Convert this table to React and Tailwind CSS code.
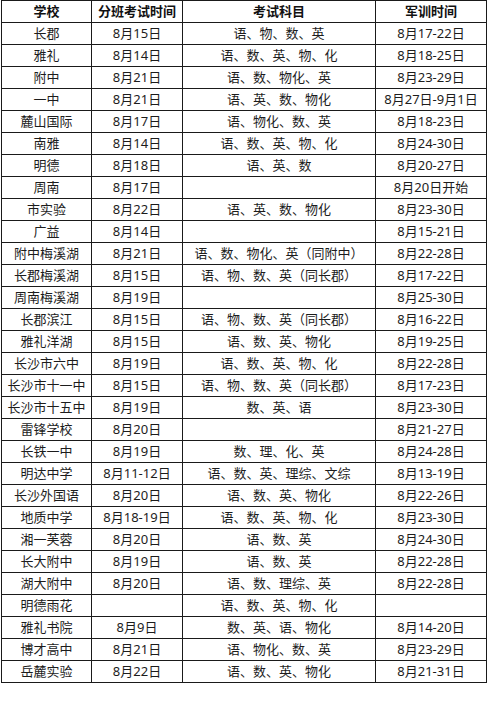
const rows = [
  ['长郡', '8月15日', '语、物、数、英', '8月17-22日'],
  ['雅礼', '8月14日', '语、数、英、物、化', '8月18-25日'],
  ['附中', '8月21日', '语、数、物化、英', '8月23-29日'],
  ['一中', '8月21日', '语、英、数、物化', '8月27日-9月1日'],
  ['麓山国际', '8月17日', '语、物化、数、英', '8月18-23日'],
  ['南雅', '8月14日', '语、数、英、物、化', '8月24-30日'],
  ['明德', '8月18日', '语、英、数', '8月20-27日'],
  ['周南', '8月17日', '', '8月20日开始'],
  ['市实验', '8月22日', '语、英、数、物化', '8月23-30日'],
  ['广益', '8月14日', '', '8月15-21日'],
  ['附中梅溪湖', '8月21日', '语、数、物化、英（同附中）', '8月22-28日'],
  ['长郡梅溪湖', '8月15日', '语、物、数、英（同长郡）', '8月17-22日'],
  ['周南梅溪湖', '8月19日', '', '8月25-30日'],
  ['长郡滨江', '8月15日', '语、物、数、英（同长郡）', '8月16-22日'],
  ['雅礼洋湖', '8月15日', '语、数、英、物化', '8月19-25日'],
  ['长沙市六中', '8月19日', '语、数、英、物、化', '8月22-28日'],
  ['长沙市十一中', '8月15日', '语、物、数、英（同长郡）', '8月17-23日'],
  ['长沙市十五中', '8月19日', '数、英、语', '8月23-30日'],
  ['雷锋学校', '8月20日', '', '8月21-27日'],
  ['长铁一中', '8月19日', '数、理、化、英', '8月24-28日'],
  ['明达中学', '8月11-12日', '语、数、英、理综、文综', '8月13-19日'],
  ['长沙外国语', '8月20日', '语、数、英、物化', '8月22-26日'],
  ['地质中学', '8月18-19日', '语、数、英、物、化', '8月23-30日'],
  ['湘一芙蓉', '8月20日', '语、数、英', '8月24-30日'],
  ['长大附中', '8月19日', '语、数、英', '8月22-28日'],
  ['湖大附中', '8月20日', '语、数、理综、英', '8月22-28日'],
  ['明德雨花', '', '语、数、英、物、化', ''],
  ['雅礼书院', '8月9日', '数、英、语、物化', '8月14-20日'],
  ['博才高中', '8月21日', '语、物化、数、英', '8月23-29日'],
  ['岳麓实验', '8月22日', '语、数、英、物化', '8月21-31日'],
]

function Cell({ children, bold }) {
  return (
    <div
      className={`h-[22px] border-r border-b border-[#1a1a1a] flex items-center justify-center whitespace-nowrap text-[13px] leading-none ${bold ? 'font-bold text-[#111]' : 'text-[#1c1c1c]'}`}
    >
      {children}
    </div>
  )
}

export default function App() {
  return (
    <div
      className="w-[488px] h-[701px] bg-white overflow-hidden"
      style={{ fontFamily: '"Noto Sans", "Noto Sans CJK SC", sans-serif' }}
    >
      {/* Table */}
      <div className="ml-[1px] w-[486px] border-l border-t border-[#1a1a1a] grid grid-cols-[90px_91px_193px_111px]">
        <Cell bold>学校</Cell>
        <Cell bold>分班考试时间</Cell>
        <Cell bold>考试科目</Cell>
        <Cell bold>军训时间</Cell>
        {rows.map((r, i) => (
          <div key={i} className="contents">
            <Cell>{r[0]}</Cell>
            <Cell>{r[1]}</Cell>
            <Cell>{r[2]}</Cell>
            <Cell>{r[3]}</Cell>
          </div>
        ))}
      </div>
    </div>
  )
}
